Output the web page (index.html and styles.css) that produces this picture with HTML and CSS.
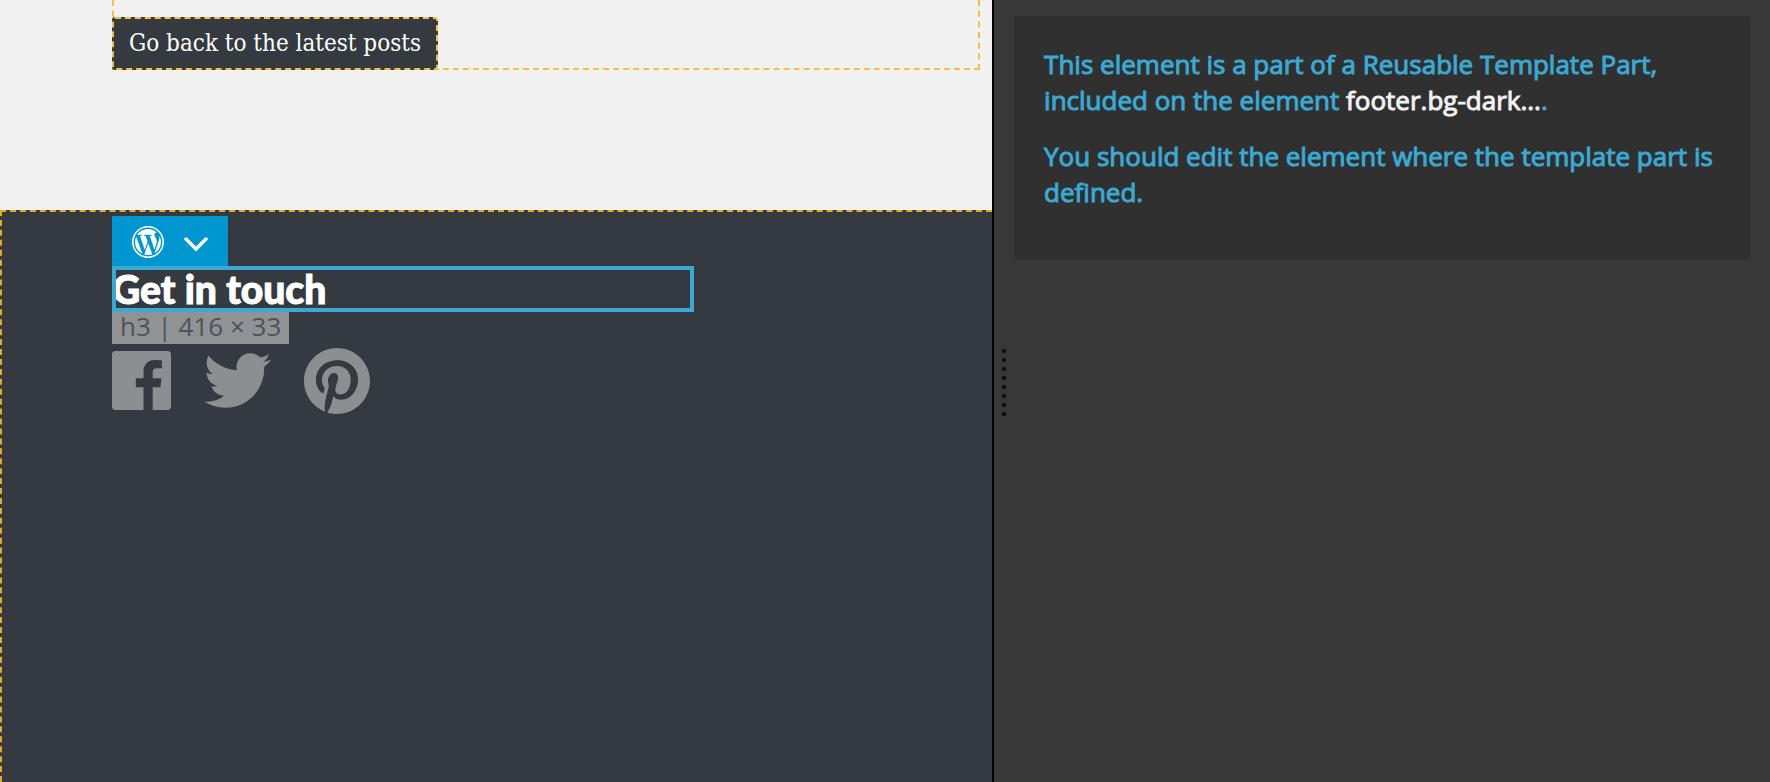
FILE: index.html
```
<!DOCTYPE html>
<html lang="en">
<head>
  <meta charset="UTF-8" />
  <meta name="viewport" content="width=device-width, initial-scale=1.0"/>
  <title>Page Editor</title>
  <link rel="stylesheet" href="styles.css">
</head>
<body>

  <main class="preview">
    <div class="posts-nav">
      <div class="outlined">
        <a href="#" class="back-btn">Go back to the latest posts</a>
      </div>
    </div>

    <footer class="site-footer">
      <div class="toolbar">
        <button class="tool" type="button" aria-label="WordPress">
          <svg width="32" height="32" viewBox="2 2 20 20" fill="#fff"><path transform="translate(12 12) scale(.9) translate(-12 -12)" d="M12.158 12.786l-2.698 7.84c.806.236 1.657.365 2.54.365 1.047 0 2.05-.18 2.986-.51-.024-.037-.046-.078-.065-.123l-2.762-7.57zM3.009 12c0 3.56 2.07 6.634 5.068 8.092L3.788 8.342c-.5 1.117-.78 2.354-.78 3.658zm15.06-.454c0-1.112-.398-1.88-.74-2.48-.456-.74-.883-1.368-.883-2.11 0-.825.627-1.595 1.51-1.595.04 0 .078.006.116.008-1.598-1.464-3.73-2.36-6.07-2.36-3.14 0-5.904 1.613-7.512 4.053.21.008.41.012.58.012.94 0 2.395-.114 2.395-.114.484-.028.54.684.057.74 0 0-.487.058-1.03.086l3.275 9.74 1.968-5.902-1.4-3.838c-.485-.028-.944-.085-.944-.085-.486-.03-.43-.77.056-.742 0 0 1.484.114 2.368.114.94 0 2.397-.114 2.397-.114.486-.028.543.684.058.74 0 0-.488.058-1.03.086l3.25 9.665.897-2.997c.456-1.17.684-2.137.684-2.907zm1.82-3.86c.04.286.06.593.06.924 0 .912-.17 1.938-.683 3.22l-2.746 7.94c2.672-1.558 4.47-4.454 4.47-7.77 0-1.564-.4-3.033-1.1-4.314z"/><circle cx="12" cy="12" r="9.5" fill="none" stroke="#fff"/></svg>
        </button>
        <button class="tool" type="button" aria-label="More actions">
          <svg width="24" height="20" viewBox="0 0 24 20" fill="none" stroke="#fff" stroke-width="3.4" stroke-linecap="round"><path d="M2 7l10 10L22 7"/></svg>
        </button>
      </div>
      <h3 class="selected">Get in touch</h3>
      <span class="size-label">h3 | 416 × 33</span>
      <div class="social">
        <a href="#" aria-label="Facebook">
          <svg width="59" height="59" viewBox="0 0 24 24"><path d="M22.676 0H1.324C.593 0 0 .593 0 1.324v21.352C0 23.408.593 24 1.324 24h11.494v-9.294H9.689v-3.621h3.129V8.41c0-3.099 1.894-4.785 4.659-4.785 1.325 0 2.464.097 2.796.141v3.24h-1.921c-1.5 0-1.792.721-1.792 1.771v2.311h3.584l-.465 3.63H16.56V24h6.115c.733 0 1.325-.592 1.325-1.324V1.324C24 .593 23.408 0 22.676 0"/></svg>
        </a>
        <a href="#" aria-label="Twitter">
          <svg width="67" height="67" viewBox="0 0 24 24"><path d="M23.954 4.569c-.885.389-1.83.654-2.825.775 1.014-.611 1.794-1.574 2.163-2.723-.951.555-2.005.959-3.127 1.184-.896-.959-2.173-1.559-3.591-1.559-2.717 0-4.92 2.203-4.92 4.917 0 .39.045.765.127 1.124C7.691 8.094 4.066 6.13 1.64 3.161c-.427.722-.666 1.561-.666 2.475 0 1.71.87 3.213 2.188 4.096-.807-.026-1.566-.248-2.228-.616v.061c0 2.385 1.693 4.374 3.946 4.827-.413.111-.849.171-1.296.171-.314 0-.615-.03-.916-.086.631 1.953 2.445 3.377 4.604 3.417-1.68 1.319-3.809 2.105-6.102 2.105-.39 0-.779-.023-1.17-.067 2.189 1.394 4.768 2.209 7.557 2.209 9.054 0 13.999-7.496 13.999-13.986 0-.209 0-.42-.015-.63.961-.689 1.8-1.56 2.46-2.548l-.047-.02z"/></svg>
        </a>
        <a href="#" aria-label="Pinterest">
          <svg width="66" height="66" viewBox="0 0 24 24"><path d="M12 0C5.373 0 0 5.372 0 12c0 5.084 3.163 9.426 7.627 11.174-.105-.949-.2-2.405.042-3.441.218-.937 1.407-5.965 1.407-5.965s-.359-.719-.359-1.782c0-1.668.967-2.914 2.171-2.914 1.023 0 1.518.769 1.518 1.69 0 1.029-.655 2.568-.994 3.995-.283 1.194.599 2.169 1.777 2.169 2.133 0 3.772-2.249 3.772-5.495 0-2.873-2.064-4.882-5.012-4.882-3.414 0-5.418 2.561-5.418 5.207 0 1.031.397 2.138.893 2.738.098.119.112.224.083.345l-.333 1.36c-.053.22-.174.267-.402.161-1.499-.698-2.436-2.889-2.436-4.649 0-3.785 2.75-7.262 7.929-7.262 4.163 0 7.398 2.967 7.398 6.931 0 4.136-2.607 7.464-6.227 7.464-1.216 0-2.359-.631-2.75-1.378l-.748 2.853c-.271 1.043-1.002 2.35-1.492 3.146 1.124.347 2.317.535 3.554.535 6.627 0 12-5.373 12-12 0-6.628-5.373-12-12-12z"/></svg>
        </a>
      </div>
    </footer>
  </main>

  <aside class="panel">
    <svg class="grip" width="6" height="72" viewBox="0 0 6 72" fill="#111"><circle cx="3" cy="4" r="2.3"/><circle cx="3" cy="13" r="2.3"/><circle cx="3" cy="22" r="2.3"/><circle cx="3" cy="31" r="2.3"/><circle cx="3" cy="40" r="2.3"/><circle cx="3" cy="49" r="2.3"/><circle cx="3" cy="58" r="2.3"/><circle cx="3" cy="67" r="2.3"/></svg>
    <section class="notice">
      <p>This element is a part of a Reusable Template Part, included on the element <a href="#">footer.bg-dark...</a>.</p>
      <p>You should edit the element where the template part is defined.</p>
    </section>
  </aside>

</body>
</html>
```

FILE: styles.css
```
* {
  box-sizing: border-box;
  margin: 0;
  padding: 0;
}

body {
  display: flex;
  min-height: 100vh;
  font-family: 'Open Sans', sans-serif;
  background: #383838;
}

/* Page preview */
.preview {
  flex: 0 1 56.05%;
  display: flex;
  flex-direction: column;
  background: #f1f1f1;
}

.posts-nav {
  padding: 0 12px 140px 112px;
}

.outlined {
  padding-top: 17px;
  border: 2px dashed #f5bf42;
  border-top: none;
}

.back-btn {
  display: inline-block;
  vertical-align: top;
  margin: 0 0 -2px -2px;
  padding: 0 15px;
  border: 2px dashed #f5bf42;
  border-radius: 3px;
  background: #343a40;
  color: #fff;
  font-family: 'DejaVu Serif Condensed', 'DejaVu Serif', serif;
  font-size: 24px;
  line-height: 49px;
  text-decoration: none;
}

.site-footer {
  flex: 1;
  display: flex;
  flex-direction: column;
  align-items: flex-start;
  padding: 4px 0 0 110px;
  border-top: 2px dashed #e3ac1c;
  border-left: 2px dashed #e3ac1c;
  background: #343a40;
}

.toolbar {
  display: flex;
  align-items: center;
  gap: 20px;
  height: 50px;
  padding: 2px 20px 0;
  background: #0096cf;
}

.tool {
  display: flex;
  border: none;
  background: none;
  cursor: pointer;
}

.selected {
  width: 66.1%;
  outline: 4px solid #3ba9d3;
  outline-offset: -4px;
  color: #fff;
  font-family: 'Lato', sans-serif;
  font-size: 39px;
  font-weight: 900;
  line-height: 46px;
  -webkit-text-stroke: 1px;
}

.size-label {
  padding: 0 8px 4px;
  background: #8f9396;
  color: #505254;
  font-size: 26px;
  line-height: 28px;
}

.social {
  display: flex;
  align-items: center;
  gap: 33px;
  padding-top: 3px;
}

.social a {
  display: flex;
}

.social svg {
  fill: #8b8f92;
}

/* Settings panel */
.panel {
  flex: 1;
  display: flex;
  align-items: flex-start;
  padding: 0 20px 16px 7px;
  gap: 7px;
  border-left: 2px solid #000;
}

.grip {
  flex: none;
  align-self: center;
}

.notice {
  flex: 1;
  margin-top: 16px;
  padding: 30px 30px 50px;
  border-radius: 3px;
  background: #303030;
  color: #3ba9d3;
  font-size: 26px;
  line-height: 36px;
  -webkit-text-stroke: 1px;
}

.notice p + p {
  margin-top: 20px;
}

.notice a {
  color: #f1f1f1;
  text-decoration: none;
}
```
